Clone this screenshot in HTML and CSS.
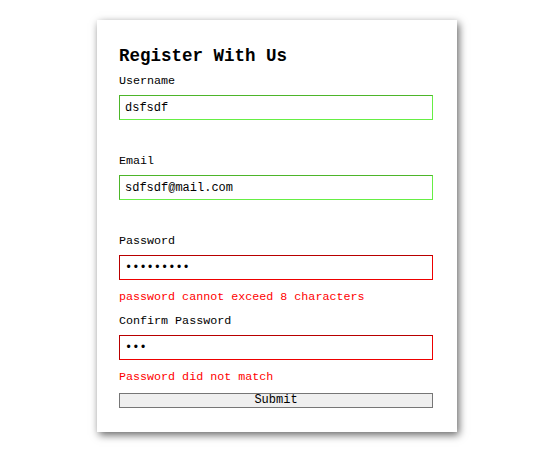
FILE: index.html
```html
<!DOCTYPE html>
<html>
<head>
<meta charset="utf-8">
<link rel="stylesheet" href="styles.css">
</head>
<body>
<form class="card">
  <h2 class="title">Register With Us</h2>
  <div class="field">
    <label class="label">Username</label>
    <div class="box ok"><input class="input" type="text" value="dsfsdf"></div>
    <div class="error"></div>
  </div>
  <div class="field">
    <label class="label">Email</label>
    <div class="box ok"><input class="input" type="text" value="sdfsdf@mail.com"></div>
    <div class="error"></div>
  </div>
  <div class="field">
    <label class="label">Password</label>
    <div class="box bad"><input class="input" type="password" value="123456789"></div>
    <div class="error">password cannot exceed 8 characters</div>
  </div>
  <div class="field">
    <label class="label">Confirm Password</label>
    <div class="box bad"><input class="input" type="password" value="123"></div>
    <div class="error">Password did not match</div>
  </div>
  <button class="submit" type="button">Submit</button>
</form>
</body>
</html>
```
FILE: styles.css
```css
html, body {
  height: 100%;
}
body {
  box-sizing: border-box;
  margin: 0;
  padding: 20px 0 18px 0;
  background: #fff;
  font-family: "Liberation Mono", "Courier New", monospace;
}
.card {
  box-sizing: border-box;
  width: 360px;
  height: 412px;
  margin: 0 0 0 97px;
  padding: 25px 22px 0 22px;
  background: #fff;
  box-shadow: 2px 3px 8px rgba(0, 0, 0, 0.6);
  display: flex;
  flex-direction: column;
}
.title {
  margin: 0 0 6px 0;
  font-size: 17.5px;
  line-height: 22px;
  font-weight: bold;
}
.field {
  display: flex;
  flex-direction: column;
}
.label {
  font-size: 11.7px;
  line-height: 16px;
  margin-bottom: 6px;
}
.box {
  box-sizing: border-box;
  width: 314px;
  height: 25px;
  display: flex;
  background: #fff;
  border-style: solid;
  border-width: 1px;
}
.box.ok {
  border-top-color: #4db52a;
  border-left-color: #4db52a;
  border-right-color: #66ee44;
  border-bottom-color: #66ee44;
}
.box.bad {
  border-top-color: #b80000;
  border-left-color: #b80000;
  border-right-color: #ee0000;
  border-bottom-color: #ee0000;
}
.input {
  -webkit-appearance: none;
  appearance: none;
  flex: 1;
  min-width: 0;
  height: 100%;
  margin: 0;
  padding: 0 5px;
  font-family: "Liberation Mono", "Courier New", monospace;
  font-size: 12px;
  border: 0;
  outline: none;
  background: transparent;
  color: #000;
}
.error {
  min-height: 16px;
  margin: 9px 0 8px 0;
  font-size: 11.7px;
  line-height: 16px;
  color: #ff0000;
}
.submit {
  box-sizing: border-box;
  width: 314px;
  height: 15px;
  margin: 0;
  padding: 0;
  border: 1px solid #767676;
  background: #efefef;
  font-family: "Liberation Mono", "Courier New", monospace;
  font-size: 12px;
  line-height: 13px;
  color: #000;
}
```
